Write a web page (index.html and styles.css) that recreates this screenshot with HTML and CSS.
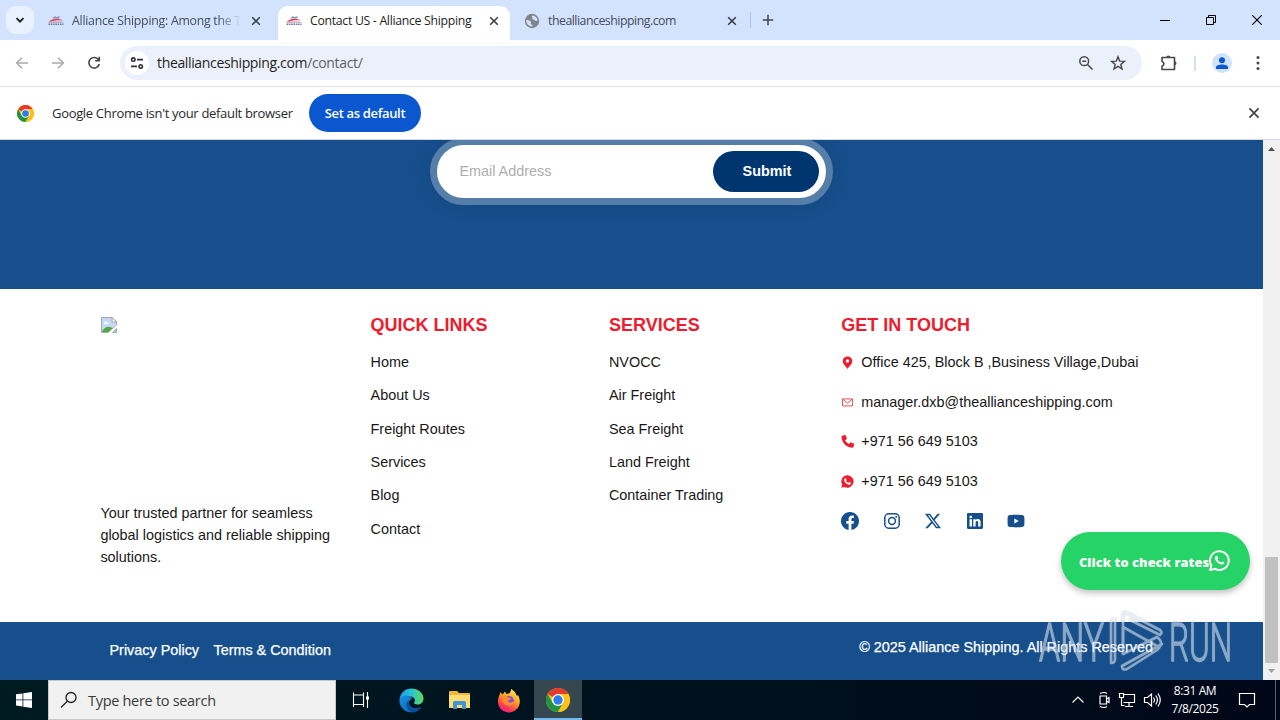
FILE: index.html
```html
<!DOCTYPE html>
<html lang="en">
<head>
<meta charset="utf-8">
<title>Contact US - Alliance Shipping</title>
<link rel="stylesheet" href="styles.css">
</head>
<body>
<svg width="0" height="0" class="defs">
  <symbol id="logo" viewBox="0 0 16 16"><path d="M4 5.500 7 3l1 1 4-.8-1 2.300z" fill="#8797b8"/><path d="M1 8.500C5 5 10 5 15.500 7.500 10 6.800 6 7.300 2 9z" fill="#e2415a"/><path d="M.5 10h15M.5 11.500h15" stroke="#697ca5" stroke-width="1.200" stroke-dasharray="1.600 .7"/><path d="M2 9h12" stroke="#d897a8"/></symbol>
  <symbol id="x" viewBox="0 0 10 10"><path d="m1.200 1.200 7.600 7.600m0-7.600L1.200 8.800" fill="none" stroke="currentColor" stroke-width="1.500"/></symbol>
  <symbol id="chrome" viewBox="0 0 24 24"><circle cx="12" cy="12" r="12" fill="#fbc116"/><path d="M12 12 1.600 6A12 12 0 0 1 22.400 6H12z" fill="#e33b2e"/><path d="M1.600 6A12 12 0 0 0 12 24l5.200-9L12 12 6.800 15z" fill="#229342"/><path d="M22.400 6H12l5.200 9L12 24A12 12 0 0 0 22.400 6" fill="#fbc116"/><circle cx="12" cy="12" r="6" fill="#fff"/><circle cx="12" cy="12" r="4.700" fill="#2f7de9"/></symbol>
  <symbol id="handset" viewBox="0 0 16 16"><path d="M11.609 9.587c-.197-.099-1.170-.578-1.353-.646-.182-.065-.315-.099-.445.099-.133.197-.513.646-.627.775-.114.133-.232.148-.43.05-.197-.1-.836-.308-1.592-.985-.59-.525-.985-1.175-1.103-1.372-.114-.198-.011-.304.088-.403.087-.088.197-.232.296-.346.1-.114.133-.198.198-.33.065-.134.034-.248-.015-.347-.05-.099-.445-1.076-.612-1.470-.16-.389-.323-.335-.445-.34-.114-.007-.247-.007-.38-.007a.73.73 0 0 0-.529.247c-.182.198-.691.677-.691 1.654s.71 1.916.81 2.049c.098.133 1.394 2.132 3.383 2.992.47.205.84.326 1.129.418.475.152.904.129 1.246.08.38-.058 1.171-.48 1.338-.943.164-.464.164-.86.114-.943-.049-.084-.182-.133-.38-.232"/></symbol>
</svg>

<header class="browser">
  <div class="tabs">
    <button class="tab-search"><svg width="10" height="10" viewBox="0 0 10 10"><path d="m1.500 3.200 3.500 3.500 3.500-3.500" fill="none" stroke="#1b1b1f" stroke-width="1.800"/></svg></button>
    <div class="tab"><div class="tab-body"><svg class="fav"><use href="#logo"/></svg><span class="tab-title faded">Alliance Shipping: Among the T</span><svg class="tab-x"><use href="#x"/></svg></div></div>
    <div class="tab active"><div class="tab-body"><svg class="fav"><use href="#logo"/></svg><span class="tab-title t2">Contact US - Alliance Shipping</span><svg class="tab-x"><use href="#x"/></svg></div></div>
    <div class="tab"><div class="tab-body"><svg class="fav" viewBox="0 0 16 16"><circle cx="8" cy="8" r="7.200" fill="#80868b"/><path d="M9 2.500c2.500.5 4.500 2.500 4.700 5-1.500 1-3 .3-3.200-.7C10 6 9 6.700 8.300 6.300 7.500 5.500 9.300 5 8.500 4.500 7.500 4 8 2.700 9 2.500M2.300 7c2 0 3.700.7 4.500 1.700.7 1-.6 1.600 0 2.400.5.6 1.700.6 2 2.200-4 .4-6.800-2.500-6.500-6.300" fill="#d5e3fd"/></svg><span class="tab-title t3">theallianceshipping.com</span><svg class="tab-x"><use href="#x"/></svg></div></div>
    <span class="tab-divider"></span>
    <svg class="new-tab" viewBox="0 0 12 12"><path d="M6 .8v10.400M.8 6h10.400" stroke="#3e4350" stroke-width="1.500"/></svg>
    <div class="window-buttons">
      <svg width="10" height="10" viewBox="0 0 10 10"><path d="M0 5.500h10" stroke="#000"/></svg>
      <svg width="10" height="10" viewBox="0 0 10 10"><path d="M.5 2.500h7v7h-7zM2.500 2.500v-2h7v7h-2" fill="none" stroke="#000"/></svg>
      <svg width="10" height="10" viewBox="0 0 10 10"><path d="m0 0 10 10M10 0 0 10" stroke="#000" stroke-width="1.100"/></svg>
    </div>
  </div>

  <div class="toolbar">
    <svg class="nav-icon dim" viewBox="0 0 16 16"><path d="M14 8H3m5-5.300L2.700 8 8 13.300"/></svg>
    <svg class="nav-icon dim" viewBox="0 0 16 16"><path d="M2 8h11M8 2.700 13.300 8 8 13.300"/></svg>
    <svg class="nav-icon" viewBox="0 0 16 16"><path d="M12.800 5.200A5.300 5.300 0 1 0 13.300 9M13.300 1.800v4H9.200"/></svg>
    <div class="omnibox">
      <span class="site-info"><svg width="14" height="14" viewBox="0 0 14 14"><g fill="none" stroke="#303238" stroke-width="1.600"><circle cx="3.300" cy="3.600" r="1.700"/><path d="M7 3.600h6M1 10.400h6"/><circle cx="10.700" cy="10.400" r="1.700"/></g></svg></span>
      <span class="url">theallianceshipping.com<i>/contact/</i></span>
      <svg class="omni-icon" viewBox="0 0 16 16"><g fill="none" stroke="#474747" stroke-width="1.500"><circle cx="6.200" cy="6.200" r="4.400"/><path d="m9.500 9.500 5 5M4.300 6.200h3.800"/></g></svg>
      <svg class="omni-icon" viewBox="0 0 16 16"><path d="m8 1.800 1.700 4.300 4.700.3-3.600 3 1.200 4.600L8 11.400 4 14l1.200-4.600-3.600-3 4.700-.3z" fill="none" stroke="#474747" stroke-width="1.400"/></svg>
    </div>
    <svg class="ext" viewBox="0 0 18 18"><path d="M2 3.500h12.500v12H2v-3.300c2.500-.8 2.500-4 0-4.700z" fill="none" stroke="#474747" stroke-width="1.600" stroke-linejoin="round"/><path d="M6.300 3.500a2 2 0 0 1 4 0zM14.500 7.300a2 2 0 0 1 0 4z" fill="#474747"/></svg>
    <span class="divider"></span>
    <span class="avatar"><svg width="14" height="14" viewBox="0 0 14 14"><g fill="#0b57d0"><circle cx="7" cy="4.200" r="3"/><path d="M1 13v-1.700C1 7.500 13 7.500 13 11.300V13z"/></g></svg></span>
    <svg class="menu" viewBox="0 0 4 16"><g fill="#474747"><circle cx="2" cy="2.500" r="1.500"/><circle cx="2" cy="8" r="1.500"/><circle cx="2" cy="13.500" r="1.500"/></g></svg>
  </div>

  <div class="infobar">
    <svg width="17" height="17"><use href="#chrome"/></svg>
    <span class="info-text">Google Chrome isn't your default browser</span>
    <button class="default-button">Set as default</button>
    <svg class="info-x"><use href="#x"/></svg>
  </div>
</header>

<div class="viewport">
  <main class="page">
    <section class="subscribe">
      <form class="subscribe-form"><span class="placeholder">Email Address</span><span class="submit">Submit</span></form>
    </section>

    <footer class="footer">
      <div class="brand">
        <svg width="16" height="16" viewBox="0 0 16 16"><path d="M.5.500h10.500l4.500 4.500V8L7 15.500H.5z" fill="#c5d9f5" stroke="#a4a7ab"/><path d="M11 .5V5h4.500z" fill="#fff" stroke="#a4a7ab"/><path d="M3 6c0-2 3-2 3.300-.5C8 5.500 8 7 7 7H3.500z" fill="#fff"/><path d="M1 15c1-4 5-6 8-5l3 1-4 4z" fill="#56a847"/><path d="m7 16 9-8v2.500L10 16z" fill="#fff"/><path d="M11.500 15.500h4v-4z" fill="#b6d3b0" stroke="#a4a7ab"/></svg>
        <p>Your trusted partner for seamless global logistics and reliable shipping solutions.</p>
      </div>
      <div class="col"><h2>QUICK LINKS</h2><ul><li>Home</li><li>About Us</li><li>Freight Routes</li><li>Services</li><li>Blog</li><li>Contact</li></ul></div>
      <div class="col"><h2>SERVICES</h2><ul><li>NVOCC</li><li>Air Freight</li><li>Sea Freight</li><li>Land Freight</li><li>Container Trading</li></ul></div>
      <div class="col contact"><h2>GET IN TOUCH</h2>
        <ul>
          <li><svg viewBox="0 0 13 13"><path d="M6.500.5a4.700 4.700 0 0 0-4.800 4.700c0 2.500 3.500 5.500 4.800 7.700 1.300-2.200 4.800-5.200 4.800-7.700A4.700 4.700 0 0 0 6.500.5m0 2.800a1.700 1.700 0 1 1 0 3.400 1.700 1.700 0 0 1 0-3.400" fill="#ed1c2e" fill-rule="evenodd"/></svg><span>Office 425, Block B ,Business Village,Dubai</span></li>
          <li><svg viewBox="0 0 13 13"><path d="M1.500 2.900h10v7h-10zM1.800 3.200l4.700 4 4.700-4" fill="none" stroke="#ed1c2e" stroke-width=".75"/></svg><span>manager.dxb@theallianceshipping.com</span></li>
          <li><svg viewBox="0 0 16 16"><path d="M1.600.8 4.800.1c.4-.1.800.1.900.5l1.400 3.500c.2.400 0 .8-.3 1L5.100 6.500c1.100 2.200 2.700 3.700 4.700 4.600l1.400-1.700c.3-.3.700-.5 1-.3l3.400 1.500c.4.200.6.500.5.900l-.8 3.300c-.1.500-.5.800-1 .8C6.500 15.600.7 9.500.7 1.900c0-.5.400-1 .9-1.100" fill="#ed1c2e"/></svg><span>+971 56 649 5103</span></li>
          <li><svg viewBox="0 0 16 16"><path d="M8 .4a7.600 7.600 0 0 0-6.500 11.500L.3 15.700l4-1A7.600 7.600 0 1 0 8 .4" fill="#ed1c2e"/><use href="#handset" fill="#fff" stroke="#fff" stroke-width=".5"/></svg><span>+971 56 649 5103</span></li>
        </ul>
        <div class="social">
          <svg viewBox="0 0 16 16"><path d="M16 8.049c0-4.446-3.582-8.050-8-8.050C3.580 0-.002 3.603-.002 8.050c0 4.017 2.926 7.347 6.750 7.951v-5.625h-2.030V8.050H6.750V6.275c0-2.017 1.195-3.131 3.022-3.131.876 0 1.791.157 1.791.157v1.980h-1.009c-.993 0-1.303.621-1.303 1.258v1.510h2.218l-.354 2.326H9.250V16c3.824-.604 6.750-3.934 6.750-7.951"/></svg>
          <svg viewBox="0 0 18 18"><g fill="none" stroke="#164f8c" stroke-width="1.500"><rect x="1.800" y="1.800" width="14.400" height="14.400" rx="4"/><circle cx="9" cy="9" r="3.400"/></g><circle cx="13.200" cy="4.800" r="1"/></svg>
          <svg viewBox="-1 -1 18 18"><path d="M12.600.75h2.454l-5.360 6.142L16 15.250h-4.937l-3.867-5.070-4.425 5.070H.316l5.733-6.570L0 .75h5.063l3.495 4.633L12.601.75Zm-.86 13.028h1.360L4.323 2.145H2.865z"/></svg>
          <svg viewBox="-1 -1 18 18"><path d="M0 1.146C0 .513.526 0 1.175 0h13.650C15.474 0 16 .513 16 1.146v13.708c0 .633-.526 1.146-1.175 1.146H1.175C.526 16 0 15.487 0 14.854zm4.943 12.248V6.169H2.542v7.225zm-1.200-8.212c.837 0 1.358-.554 1.358-1.248-.015-.709-.52-1.248-1.342-1.248S2.400 3.226 2.400 3.934c0 .694.521 1.248 1.327 1.248zm4.908 8.212V9.359c0-.216.016-.432.08-.586.173-.431.568-.878 1.232-.878.869 0 1.216.662 1.216 1.634v3.865h2.401V9.250c0-2.220-1.184-3.252-2.764-3.252-1.274 0-1.845.7-2.165 1.193V6.169h-2.400c.03.678 0 7.225 0 7.225z"/></svg>
          <svg viewBox="0 0 18 18"><path d="M3 3C6 2.500 12 2.500 15 3c1.700.3 2.400 1.300 2.400 3v6c0 1.700-.7 2.700-2.400 3-3 .5-9 .5-12 0C1.300 14.700.6 13.700.6 12V6C.6 4.300 1.300 3.300 3 3m4.300 3.400v5.200L11.800 9z" fill-rule="evenodd"/></svg>
        </div>
      </div>
    </footer>

    <section class="legal">
      <nav><span>Privacy Policy</span><span>Terms &amp; Condition</span></nav>
      <p>© 2025 Alliance Shipping. All Rights Reserved</p>
    </section>
  </main>
  <div class="scrollbar">
    <svg width="9" height="5" viewBox="0 0 9 5"><path d="m1 5 3.500-4L8 5z" fill="#505050"/></svg>
    <span class="thumb"></span>
    <svg width="9" height="5" viewBox="0 0 9 5"><path d="m1 0 3.500 4L8 0z" fill="#a0a0a0"/></svg>
  </div>
  <div class="rates"><span>Click to check rates</span><svg width="21" height="21" viewBox="0 0 21 21"><path d="M1 20.200 2.300 15.400A9.400 9.400 0 1 1 6 18.900z" fill="none" stroke="#fff" stroke-width="2"/><path d="M6.600 6.200c1.200-1.300 1.900-.2 2.500 1.500.2.600-.6 1-.7 1.500 1 1.700 2 2.600 3.700 3.300.5-.2.900-1.300 1.400-1.100 1.900.8 2.500 1 1.400 2.200-3.300 3.300-11.500-4.200-8.300-7.400" fill="#fff"/></svg></div>
  <svg class="watermark" viewBox="0 0 200 70" width="200" height="70">
    <g fill="#dbe5f0" stroke="#dbe5f0" stroke-width="1.300"><text x="1" y="53" textLength="65" lengthAdjust="spacingAndGlyphs">ANY</text><text x="131" y="53" textLength="63" lengthAdjust="spacingAndGlyphs">RUN</text></g>
    <g fill="none" stroke="#dbe5f0" stroke-width="2.600" stroke-linejoin="round" stroke-linecap="round"><path d="M73 55V15q0-4 4-4v40q0 4-4 4"/><path d="M85 41V7q0-4 4-2l33 17q3 3 0 5L92 12"/><path d="M85 46V19l34 19"/><path d="M85 46l34-17q8 6 0 13L89 61q-5 2-5-3l40-22"/></g>
  </svg>
</div>

<footer class="taskbar">
  <span class="start"><svg width="16" height="16" viewBox="0 0 16 16"><path d="m0 2.300 6.500-.9v6.100H0zM7.300 1.300 16 0v7.500H7.300zM0 8.300h6.500v6.100L0 13.500zM7.300 8.300H16V16l-8.700-1.300z" fill="#fff"/></svg></span>
  <div class="search"><svg width="18" height="18" viewBox="0 0 18 18"><g fill="none" stroke="#222" stroke-width="1.300"><circle cx="11" cy="6.500" r="5"/><path d="M7.300 10.200 1 16.500"/></g></svg><span>Type here to search</span></div>
  <span class="app"><svg width="18" height="18" viewBox="0 0 18 18"><path d="M1.500 1.500v2.500h10V1.500M1.500 16v-2.500h10V16M1.500 4v9.500M11.500 4v9.500M15.500 1v16" fill="none" stroke="#fff" stroke-width="1.100"/><path d="M14 5.500h3v3h-3z" fill="#fff"/></svg></span>
  <span class="app edge"><svg width="25" height="25" viewBox="0 0 25 25"><defs><linearGradient id="e1"><stop stop-color="#1b9be8"/><stop offset=".5" stop-color="#2cc2d4"/><stop offset="1" stop-color="#5fdc55"/></linearGradient><linearGradient id="e2" x2="1" y2="1"><stop stop-color="#1a91df"/><stop offset="1" stop-color="#0b5cb0"/></linearGradient></defs><path d="M.5 12C1 5 6 .5 12.500.5 19 .5 24.500 5 24.500 10.500c0 4-3 6-6 6-3 0-4-1.200-3.300-2 2-3-.5-6-4-6-5 0-9.500 2-10.700 3.500" fill="url(#e1)"/><path d="M.5 12c2-6 12-5.500 12.500-1-3 .5-3.800 4-2.500 6.500 2 3.500 7 4 11.500 1.500C18 25.500 9 26 4 21 1 18 .3 15 .5 12" fill="url(#e2)"/><path d="M9.500 12c-4 4-1.500 11 4.500 12.400 3.500-.2 6.500-2.400 8-5.400-4.500 2.500-12.500 1.500-12.500-7" fill="#0d4e9e"/></svg></span>
  <span class="app"><svg width="24" height="20" viewBox="0 0 24 20"><path d="M1 2q0-1 1-1h7l2 2h10q1 0 1 1v14H1z" fill="#f0b73c"/><path d="M1 5h21v13H1z" fill="#ffdc72"/><path d="M5 19v-6.500q0-1.500 1.500-1.500h10q1.500 0 1.500 1.500V19h-4v-4H9v4z" fill="#3e95d6"/></svg></span>
  <span class="app fox"><svg width="24" height="25" viewBox="0 0 24 25"><defs><linearGradient id="f" x1=".8" y1="0" x2=".3" y2="1"><stop stop-color="#fff14a"/><stop offset=".45" stop-color="#ff9b28"/><stop offset=".8" stop-color="#ff3554"/><stop offset="1" stop-color="#e8208b"/></linearGradient></defs><path d="M2.500 7 3.500 4l2 2.500L8 3.500l1.500 2.500Q14 6 14 1c4 2 5 5 6 7l1-1c5 9-1 17.500-9 17.500S-2 17 2.500 7" fill="url(#f)"/><circle cx="12" cy="13" r="5" fill="#8550d8"/><path d="M5 8c3-1 5 0 6 1.500 2 0 3 .5 3 1.500l-3 1.500c0 3 5 3 7-1 0 8-11 8-12.500 1z" fill="#ff8e28"/></svg></span>
  <span class="app current"><svg width="24" height="24"><use href="#chrome"/></svg></span>
  <div class="tray">
    <svg width="14" height="16" viewBox="0 0 14 16"><path d="m1.500 10.500 5.500-5.500 5.500 5.500"/></svg>
    <svg class="camera" width="14" height="18" viewBox="0 0 14 18"><path d="M3 2.500q4-2 7 0M3 15.500q4 2 7 0M3 5h6.500v8H3zM9.500 8l2.500-1.500v5L9.500 10"/></svg>
    <svg width="18" height="16" viewBox="0 0 18 16"><path d="M6 2.500h10.500v8H5.500M11 10.500v4M7 14.500h8M1.500 1.500h4v4h-4zM3.500 5.500v8h3"/></svg>
    <svg width="18" height="16" viewBox="0 0 18 16"><path d="M1.500 5.500h3l4-3.500v12l-4-3.500h-3zM10.500 5.500q2 2.500 0 5M12.700 3.500q3.500 4.500 0 9M15 1.500q4.500 6.500 0 13"/></svg>
    <div class="clock"><span>8:31 AM</span><span>7/8/2025</span></div>
    <svg class="notice" width="18" height="18" viewBox="0 0 18 18"><path d="M1.500 2.500h15v11h-5L9 16l-2.500-2.500h-5z"/></svg>
    <span class="edge-line"></span>
  </div>
</footer>
</body>
</html>
```

FILE: styles.css
```css
* { box-sizing: border-box; }
body {
  margin: 0; width: 1280px; height: 720px; overflow: hidden;
  display: flex; flex-direction: column;
  font-family: "Liberation Sans", Arial, sans-serif; color: #181818;
}
svg { flex: none; display: block; }
.defs { position: absolute; }
ul, p, h2 { margin: 0; padding: 0; list-style: none; }
button { border: 0; padding: 0; font: inherit; }

.browser { height: 140px; background: #fff; font-family: "Open Sans", "Noto Sans", sans-serif; border-bottom: 1px solid #d5dae0; }
.tabs { height: 40px; background: #d3e3fd; display: flex; align-items: center; padding-left: 6px; }
.tab-search { width: 28px; height: 28px; border-radius: 9px; background: #e9f1fe; display: grid; place-items: center; margin-right: 6px; }
.tab { width: 238px; height: 40px; padding-top: 6px; color: #454b5c; }
.tab-body { width: 232px; height: 34px; display: flex; align-items: center; padding: 0 11px 5px 8px; }
.active { color: #1f1f1f; }
.active .tab-body { background: #fff; border-radius: 10px 10px 0 0; }
.fav { width: 16px; height: 16px; margin-right: 8px; }
.tab-title { width: 174px; font-size: 12.300px; line-height: 18px; white-space: nowrap; letter-spacing: -.25px; }
.faded { -webkit-mask-image: linear-gradient(90deg, #000 84%, transparent 97%); mask-image: linear-gradient(90deg, #000 84%, transparent 97%); }
.t2 { letter-spacing: -.31px; }
.t3 { letter-spacing: -.48px; }
.tab-x { width: 10px; height: 10px; margin-left: 5px; color: #33363d; }
.tab-divider { width: 1px; height: 16px; margin-left: -4px; background: #a8c7fa; }
.new-tab { width: 12px; height: 12px; margin-left: 11px; }
.window-buttons { margin-left: auto; display: flex; gap: 36px; padding-right: 18px; }

.toolbar { height: 47px; display: flex; align-items: center; padding-left: 14px; border-bottom: 1px solid #e0e3e8; }
.nav-icon { width: 16px; height: 16px; margin-right: 20px; fill: none; stroke: #474747; stroke-width: 1.600; }
.dim { stroke: #adadad; }
.omnibox { width: 1022px; height: 34px; margin-left: -2px; border-radius: 17px; background: #ecf0fa; display: flex; align-items: center; padding: 0 16px 0 5px; }
.site-info { width: 24px; height: 24px; border-radius: 50%; background: #fff; display: grid; place-items: center; margin-right: 8px; }
.url { font-size: 14px; letter-spacing: -.35px; color: #1f1f1f; margin-right: auto; line-height: 20px; }
.url i { font-style: normal; color: #5b5f68; }
.omni-icon { width: 16px; height: 16px; margin-left: 16px; }
.ext { width: 18px; height: 18px; margin-left: 18px; }
.divider { width: 2px; height: 15px; background: #d5e0f3; margin: 0 17px 0 16px; }
.avatar { width: 20px; height: 20px; border-radius: 50%; background: #d0e2fc; display: grid; place-items: center; margin-left: -1px; }
.menu { width: 4px; height: 16px; margin-left: 24px; }
.infobar { height: 52px; display: flex; align-items: center; padding: 0 20px 0 17px; }
.info-text { font-size: 13px; letter-spacing: -.32px; margin-left: 18px; width: 257px; white-space: nowrap; color: #27282c; }
.default-button { width: 112px; height: 38px; border-radius: 19px; background: #0b57d0; color: #fff; font-size: 13px; font-weight: 600; letter-spacing: -.35px; }
.info-x { width: 12px; height: 12px; margin-left: auto; color: #474747; }

.viewport { position: relative; height: 540px; display: flex; }
.page { width: 1263px; }
.subscribe { height: 149px; background: #164f8c; display: flex; justify-content: center; align-items: flex-start; overflow: hidden; }
.subscribe-form { width: 403px; height: 67px; margin-top: -2px; border: 7px solid #557ea9; border-radius: 34px; background: #fff; display: flex; align-items: center; justify-content: space-between; padding: 0 7px 0 22.400px; font-size: 14.400px; box-shadow: 0 0 20px rgba(0, 20, 50, .1); }
.placeholder { color: #adadad; padding-bottom: 1px; }
.submit { width: 106px; height: 41px; line-height: 41px; padding-left: 2px; text-align: center; border-radius: 21px; background: #00366f; color: #fff; font-weight: 700; }

.footer { height: 333px; background: #fff; padding: 25px 0 0 100.400px; display: grid; grid-template-columns: 270.200px 238.400px 232.400px 1fr; font-size: 14.400px; }
.brand { padding-top: 3px; }
.brand svg { margin-left: .6px; }
.brand p { margin-top: 169px; width: 240px; line-height: 22px; }
.col h2 { font-size: 18px; line-height: 22px; color: #ed1c2e; margin-bottom: 10.200px; }
.col li { height: 33.300px; line-height: 33px; }
.contact h2 { margin-bottom: 7px; }
.contact li { display: flex; align-items: center; height: 39.600px; line-height: 39px; }
.contact li svg { width: 13px; height: 13px; margin-right: 7px; }
.social { display: flex; gap: 23.500px; margin-top: 10.400px; fill: #164f8c; }
.social svg { width: 18px; height: 18px; }

.legal { height: 58px; background: #164f8c; color: #fff; display: flex; justify-content: space-between; padding: 0 110px 0 109.500px; font-size: 14.400px; -webkit-text-stroke: .25px #fff; }
.legal nav { display: flex; gap: 14.400px; line-height: 56px; }
.legal p { line-height: 50px; }

.scrollbar { width: 17px; background: #f1f1f1; padding: 6px 0 6px; display: flex; flex-direction: column; align-items: center; }
.thumb { width: 13px; height: 106px; margin: auto 0 6px; background: #c1c1c1; }
.rates { position: absolute; left: 1061px; top: 392px; width: 189px; height: 58px; border-radius: 29px; background: #25d366; color: #fff; display: flex; align-items: center; padding-left: 18px; box-shadow: 0 3px 6px rgba(0, 0, 0, .25); font: 800 12.800px "Open Sans", "Noto Sans", sans-serif; }
.rates span { width: 130px; white-space: nowrap; letter-spacing: .05px; padding-top: 2px; }
.rates svg { margin-bottom: 2px; }
.watermark { position: absolute; left: 1038px; top: 468px; opacity: .6; filter: drop-shadow(0 0 1px rgba(90, 110, 140, .6)); font: 300 53px Roboto, sans-serif; }

.taskbar { height: 40px; background: linear-gradient(90deg, #001a22, #00101c 60%, #000718); display: flex; align-items: center; font-family: "Open Sans", "Noto Sans", sans-serif; }
.start { width: 48px; display: grid; place-items: center; }
.search { width: 288px; height: 40px; background: #f1f1f1; border: 1px solid #c6c8ca; display: flex; align-items: center; padding-left: 11px; }
.search span { margin-left: 10px; font-size: 14.500px; letter-spacing: -.3px; color: #3b3b3b; }
.app { width: 49px; height: 40px; display: grid; place-items: center; }
.edge { padding-left: 3px; }
.edge + .app { width: 51px; }
.fox { padding-right: 2px; }
.current { width: 48px; background: #35464f; box-shadow: inset 0 -2px #76b9ed; }
.tray { margin-left: auto; display: flex; align-items: center; color: #fff; }
.tray svg { margin-right: 7px; fill: none; stroke: #fff; stroke-width: 1.200; }
.tray .camera { margin: 0 7px 0 5px; }
.clock { width: 70px; display: flex; flex-direction: column; align-items: center; font-size: 12px; line-height: 18px; letter-spacing: -.4px; margin-left: -8px; }
.tray .notice { margin: 0 19px 0 8px; }
.edge-line { width: 5px; height: 40px; border-left: 1px solid #596070; }
```
